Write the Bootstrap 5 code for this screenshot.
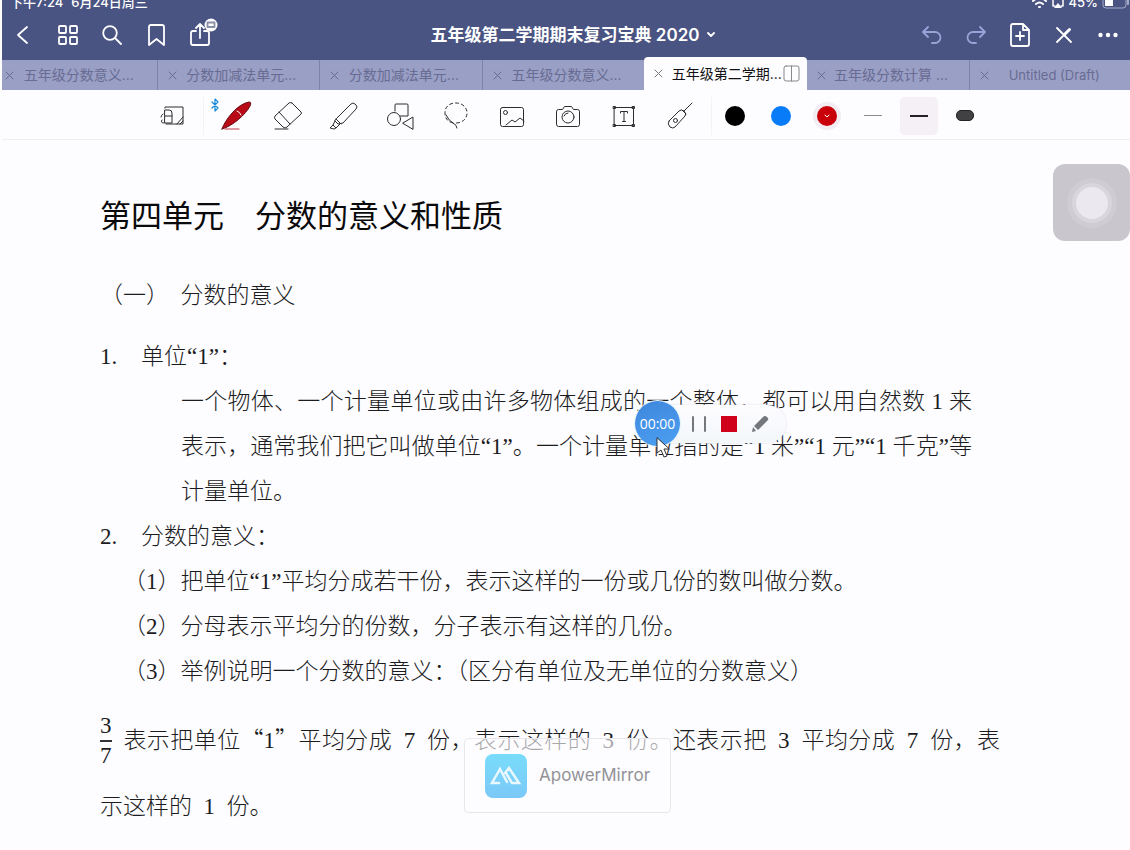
<!DOCTYPE html>
<html lang="zh-CN">
<head>
<meta charset="utf-8">
<meta name="viewport" content="width=device-width, initial-scale=1">
<title>五年级第二学期期末复习宝典2020</title>
<link href="https://cdn.jsdelivr.net/npm/bootstrap@5.3.0/dist/css/bootstrap.min.css" rel="stylesheet">
<style>
  body { background: #fdfcff; border-left: 2px solid #fdfcff; font-family: Inter, "Noto Sans CJK SC", sans-serif; color: #111; }
  svg { display: block; fill: none; stroke: currentColor; stroke-width: 1; stroke-linecap: round; stroke-linejoin: round; }
  button { background: none; border: 0; padding: 0; color: inherit; }
  .app-head { background: #4a5482; color: #fff; overflow: hidden; }
  .status-row { height: 10px; font-size: 13px; line-height: 16px; font-weight: 500; }
  .status-row > div { margin-top: -6px; }
  .title-row { height: 50px; }
  .title-row svg { stroke-width: 1.8; }
  .icon-btn { width: 44px; height: 50px; display: grid; place-items: center; }
  .icon-btn.dimmed { color: #9aa3d8; }
  .doc-title { font-size: 17px; line-height: 24px; font-weight: 600; padding-left: 14px; }
  .share-badge { top: 8px; left: 26px; }
  .tab-strip { display: grid; grid-template-columns: repeat(7, minmax(0, 1fr)); margin: -3px -2px 0 -8px; }
  .tab-item { height: 30px; margin-top: 3px; padding: 0 14px 0 10px; background: #9a9fc6; color: #686c92; border-left: 1px solid #7d83ad; font-size: 14px; line-height: 20px; white-space: nowrap; }
  .tab-item.is-active { margin-top: 0; height: 33px; padding-right: 7px; background: #fdfcff; color: #111; border: 0; border-radius: 4px 4px 0 0; }
  .tab-item a { color: inherit; text-decoration: none; flex: 1; text-align: center; }
  .tab-item.is-active a { text-align: right; padding-right: 1px; }
  .tab-item .latin { font-size: 13px; }
  .tab-close { width: 10px; }
  .tool-row { height: 50px; padding-top: 2px; border-bottom: 1px solid #efeef1; color: #2c2c2e; }
  .tool-btn { width: 56px; height: 48px; display: grid; place-items: center; }
  .tool-sep { width: 4px; height: 38px; border-right: 1px solid #f3f2f5; }
  .pen-btn { width: 46px; height: 48px; display: grid; place-items: center; }
  .dot { width: 20px; height: 20px; border-radius: 50%; display: grid; place-items: center; color: #fff; }
  .dot.black { background: #000; }
  .dot.blue { background: #087cf8; }
  .dot.red { background: #c90009; box-shadow: 0 0 0 4px #f1edf2; }
  .stroke-box { width: 38px; height: 38px; border-radius: 5px; display: grid; place-items: center; }
  .stroke-box.chosen { background: #f4f0f6; }
  .bar-thin { width: 18px; height: 1px; background: #8b8b8f; }
  .bar-mid { width: 18px; height: 2px; background: #222; }
  .bar-wide { width: 18px; height: 11px; border-radius: 5px; background: #414143; border: 1px solid #222; }
  .sheet { padding: 45px 130px 9px 98px; font-family: "Liberation Serif", "Noto Sans CJK SC", serif; font-size: 23px; font-weight: 300; line-height: 45px; color: #1c1c1e; }
  .sheet h1 { font-family: "Noto Sans CJK SC", sans-serif; font-size: 31px; line-height: 58px; font-weight: 400; margin: 0 0 30px; color: #0a0a0a; }
  .sheet h2 { font-size: 23px; line-height: 45px; font-weight: 300; margin: 0 0 16px; }
  .sheet p, .sheet ol { margin: 0; padding: 0; list-style: none; }
  .num { width: 41px; }
  .sheet .explain { padding: 0 28px 0 81px; text-align: justify; }
  .sheet .points { padding-left: 23px; }
  .sheet .example { margin-top: 11px; line-height: 66px; text-align: justify; }
  .wide-quote { font-family: "Noto Sans CJK SC", sans-serif; }
  .fraction { display: inline-flex; flex-direction: column; vertical-align: middle; margin-bottom: 4px; line-height: 28px; text-align: center; }
  .fraction span:first-child { border-bottom: 2px solid #333; }
  .assist { top: 164px; right: 0; width: 77px; height: 77px; border-radius: 12px; background: #c9c6cd; display: grid; place-items: center; }
  .assist span { width: 32px; height: 32px; border-radius: 50%; background: #ebe9ef; box-shadow: 0 0 0 4px #d8d5dc, 0 0 0 9px #cfccd3; }
  .recorder { top: 401px; left: calc(50% + 69px); height: 45px; width: 151px; }
  .rec-panel { height: 38px; margin-left: 22px; padding-left: 34px; gap: 14px; flex: 1; border-radius: 0 19px 19px 0; background: linear-gradient(#fdfcff, #f3f7fa); box-shadow: 0 0 2px #d5d8df; color: #74777b; }
  .rec-time { left: 0; top: 0; width: 45px; height: 45px; border-radius: 50%; background: linear-gradient(160deg, #3f86dd, #4ba0f2); box-shadow: 0 0 0 1px #e4f3fc; color: #fff; font-family: "Open Sans", sans-serif; font-size: 14px; line-height: 45px; text-align: center; }
  .cursor { left: 20px; top: 36px; }
  .mirror { top: 738px; left: calc(50% - 102px); width: 207px; height: 75px; padding-left: 20px; gap: 12px; background: rgba(253,252,255,.62); border: 1px solid #e9e7eb; border-radius: 4px; color: #929297; font-size: 17px; }
  .mirror-logo { width: 42px; height: 44px; border-radius: 8px; background: linear-gradient(#79dcfb, #7bc8f7); display: grid; place-items: center; }
</style>
</head>
<body class="position-relative min-vh-100">
<header class="app-head">
  <div class="status-row d-flex justify-content-between">
    <div class="d-flex gap-2 ps-2"><span>下午7:24</span><span>6月24日周三</span></div>
    <div class="d-flex gap-1">
      <svg width="15" height="16" viewBox="0 0 15 16"><path d="M1 7Q7.500 1 14 7M4 10Q7.500 7 11 10M7 13h1" stroke-width="2"/></svg>
      <svg width="14" height="16" viewBox="0 0 14 16"><path d="M4 12H2V4h10v8h-2" stroke-width="1.500"/><path d="M7 9l4 5H3z" fill="#fff" stroke="none"/></svg>
      <span>45%</span>
      <svg width="28" height="16" viewBox="0 0 28 16"><rect x="1" y="2" width="23" height="12" rx="3" stroke="#a5abca"/><path d="M3 4h8v8H3z" fill="#fff" stroke="none"/><path d="M26 6v4" stroke="#a5abca" stroke-width="2"/></svg>
    </div>
  </div>
  <nav class="title-row d-flex justify-content-between align-items-center" aria-label="文档">
    <div class="d-flex">
      <button class="icon-btn" aria-label="返回"><svg width="20" height="20" viewBox="0 0 20 20"><path d="M13 2L4 10l9 8"/></svg></button>
      <button class="icon-btn" aria-label="缩略图"><svg width="20" height="20" viewBox="0 0 20 20"><rect x="1" y="1" width="7" height="7" rx="1"/><rect x="12" y="1" width="7" height="7" rx="1"/><rect x="1" y="12" width="7" height="7" rx="1"/><rect x="12" y="12" width="7" height="7" rx="1"/></svg></button>
      <button class="icon-btn" aria-label="搜索"><svg width="20" height="20" viewBox="0 0 20 20"><circle cx="8" cy="8" r="6.800"/><path d="M13 13l6 6"/></svg></button>
      <button class="icon-btn" aria-label="书签"><svg width="20" height="22" viewBox="0 0 20 22"><path d="M3 3q0-2 2-2h11q2 0 2 2v18l-7.500-6L3 21z"/></svg></button>
      <button class="icon-btn position-relative" aria-label="分享"><svg width="20" height="24" viewBox="0 0 20 24"><path d="M6 8H3Q1 8 1 10v10q0 2 2 2h14q2 0 2-2V10q0-2-2-2h-3M10 15V2M6 5l4-4 4 4"/></svg>
        <svg class="position-absolute share-badge" width="14" height="14" viewBox="0 0 14 14"><circle cx="7" cy="7" r="6.500" fill="#fff" stroke="none"/><path d="M3.500 4.500h7v4.500h-7z" stroke="#8a8fa5"/></svg></button>
    </div>
    <button class="doc-title d-flex align-items-center gap-2"><span>五年级第二学期期末复习宝典 2020</span><svg width="8" height="6" viewBox="0 0 8 6"><path d="M1 1l3 3 3-3"/></svg></button>
    <div class="d-flex">
      <button class="icon-btn dimmed" aria-label="撤销"><svg width="20" height="20" viewBox="0 0 20 20"><path d="M6 2L1 7l5 5M1 7h12a5.500 5.500 0 0 1 0 11h-3"/></svg></button>
      <button class="icon-btn dimmed" aria-label="重做"><svg width="20" height="20" viewBox="0 0 20 20"><path d="M14 2l5 5-5 5M19 7H7a5.500 5.500 0 0 0 0 11h3"/></svg></button>
      <button class="icon-btn" aria-label="添加页面"><svg width="20" height="24" viewBox="0 0 20 24"><path d="M3 1h10l6 6v14q0 2-2 2H3q-2 0-2-2V3q0-2 2-2zM13 1v6h6M10 9v8M6 13h8"/></svg></button>
      <button class="icon-btn" aria-label="只读模式"><svg width="18" height="18" viewBox="0 0 18 18"><path d="M2 2l14 14M2 16L9 9"/><path d="M9.500 8.500l5-5" stroke-width="3"/></svg></button>
      <button class="icon-btn" aria-label="更多"><svg width="20" height="6" viewBox="0 0 20 6"><g fill="#fff" stroke="none"><circle cx="2.500" cy="3" r="2.200"/><circle cx="10" cy="3" r="2.200"/><circle cx="17.500" cy="3" r="2.200"/></g></svg></button>
    </div>
  </nav>
  <div class="tab-strip">
    <div class="tab-item d-flex align-items-center"><button class="tab-close" aria-label="关闭"><svg width="9" height="9" viewBox="0 0 9 9"><path d="M1 1l7 7M8 1L1 8"/></svg></button><a href="#">五年级分数意义...</a></div>
    <div class="tab-item d-flex align-items-center"><button class="tab-close" aria-label="关闭"><svg width="9" height="9" viewBox="0 0 9 9"><path d="M1 1l7 7M8 1L1 8"/></svg></button><a href="#">分数加减法单元...</a></div>
    <div class="tab-item d-flex align-items-center"><button class="tab-close" aria-label="关闭"><svg width="9" height="9" viewBox="0 0 9 9"><path d="M1 1l7 7M8 1L1 8"/></svg></button><a href="#">分数加减法单元...</a></div>
    <div class="tab-item d-flex align-items-center"><button class="tab-close" aria-label="关闭"><svg width="9" height="9" viewBox="0 0 9 9"><path d="M1 1l7 7M8 1L1 8"/></svg></button><a href="#">五年级分数意义...</a></div>
    <div class="tab-item is-active d-flex align-items-center"><button class="tab-close" aria-label="关闭"><svg width="9" height="9" viewBox="0 0 9 9"><path d="M1 1l7 7M8 1L1 8" stroke="#777"/></svg></button><a href="#" aria-current="page">五年级第二学期...</a><button aria-label="分屏"><svg width="17" height="17" viewBox="0 0 17 17"><path d="M3 1h11q2 0 2 2v11q0 2-2 2H3q-2 0-2-2V3q0-2 2-2zM8.500 1v15" stroke="#88878b"/></svg></button></div>
    <div class="tab-item d-flex align-items-center border-start-0"><button class="tab-close" aria-label="关闭"><svg width="9" height="9" viewBox="0 0 9 9"><path d="M1 1l7 7M8 1L1 8"/></svg></button><a href="#">五年级分数计算 ...</a></div>
    <div class="tab-item d-flex align-items-center"><button class="tab-close" aria-label="关闭"><svg width="9" height="9" viewBox="0 0 9 9"><path d="M1 1l7 7M8 1L1 8"/></svg></button><a href="#" class="latin">Untitled (Draft)</a></div>
  </div>
</header>

<div class="tool-row d-flex justify-content-center align-items-center" role="toolbar" aria-label="绘图工具">
  <button class="tool-btn" aria-label="缩放窗口"><svg width="26" height="24" viewBox="0 0 26 24"><path d="M6 4V3h18v17H7M18 20l6-7M21 20l3-3"/><path d="M6 6h4q3 0 3 3v10H6zM6 12h7M4 10q-2 1-2 3M3 16q-2 3 2 3"/></svg></button>
  <div class="tool-sep"></div>
  <button class="tool-btn" aria-label="钢笔"><svg width="46" height="40" viewBox="0 0 46 40"><path d="M3 6l6 6-3 3V3l3 3-6 6" stroke="#1689d8" stroke-width="1.200"/><path d="M13 33C16 24 28 8 40 6q3 0 1 4C37 18 24 30 13 33z" fill="#b80b16" stroke="#641018"/><path d="M28 15q3 1 4 4" stroke="#fff"/><path d="M16 33h14" stroke="#c23b48"/></svg></button>
  <button class="tool-btn" aria-label="橡皮擦"><svg width="30" height="30" viewBox="0 0 30 30"><path d="M19 2l9 9q1 1 0 2L14 26q-2 2-4 0l-8-8q-1-1 0-3L16 2q1-1 3 0zM6 11l11 12M2 28h13"/></svg></button>
  <button class="tool-btn" aria-label="荧光笔"><svg width="30" height="30" viewBox="0 0 30 30"><path d="M8 17L22 3q2-2 4 0l1 1q2 2 0 4L14 22l-5 1-3-3zM7 18l5 5M6 20l-2 4 3 3 4-4M4 24l-3 3 4 1 2-1"/></svg></button>
  <button class="tool-btn" aria-label="形状"><svg width="28" height="28" viewBox="0 0 28 28"><path d="M9 9V3q0-1 1-1h11q1 0 1 1v11H14"/><circle cx="8" cy="17" r="6.500"/><path d="M17 21l10-6v12z"/></svg></button>
  <button class="tool-btn" aria-label="套索"><svg width="28" height="30" viewBox="0 0 28 30"><path d="M11 22Q3 20 3 12C3 5 8 2 14 2s11 4 11 10-5 10-11 10" stroke-dasharray="3 3"/><path d="M4 14q3 6 7 8t4 5"/></svg></button>
  <button class="tool-btn" aria-label="图片"><svg width="26" height="24" viewBox="0 0 26 24"><rect x="1.500" y="3.500" width="23" height="19" rx="2"/><circle cx="6.500" cy="8.500" r="2"/><path d="M7 21l6-5 3 2 5-4 4 3"/></svg></button>
  <button class="tool-btn" aria-label="相机"><svg width="26" height="24" viewBox="0 0 26 24"><path d="M1.500 7.500q0-2 2-2h4l2-3h7l2 3h4q2 0 2 2v13q0 2-2 2h-19q-2 0-2-2z"/><circle cx="13" cy="13" r="6"/><path d="M9 12q1-3 4-3"/></svg></button>
  <button class="tool-btn" aria-label="文本"><svg width="26" height="24" viewBox="0 0 26 24"><path d="M3.500 3.500h19v18h-19z"/><path d="M2.500 2.500h2v2h-2zM21.500 2.500h2v2h-2zM2.500 20.500h2v2h-2zM21.500 20.500h2v2h-2zM9.500 9V7.500h7V9M13 7.500v10M11.500 17.500h3"/></svg></button>
  <button class="tool-btn" aria-label="激光笔"><svg width="28" height="30" viewBox="0 0 28 30"><path d="M3 20L13 10q2-2 5 0 3 3 1 5L9 26q-2 2-5 0-3-3-1-6zM18 10l8-8M16 9l4 4"/><circle cx="9.500" cy="19.500" r="2"/></svg></button>
  <div class="tool-sep"></div>
  <button class="pen-btn" aria-label="黑色"><span class="dot black"></span></button>
  <button class="pen-btn" aria-label="蓝色"><span class="dot blue"></span></button>
  <button class="pen-btn" aria-label="红色"><span class="dot red"><svg width="6" height="4" viewBox="0 0 6 4"><path d="M1 1l2 2 2-2"/></svg></span></button>
  <button class="pen-btn" aria-label="细线"><span class="stroke-box"><span class="bar-thin"></span></span></button>
  <button class="pen-btn" aria-label="中线"><span class="stroke-box chosen"><span class="bar-mid"></span></span></button>
  <button class="pen-btn" aria-label="粗线"><span class="stroke-box"><span class="bar-wide"></span></span></button>
</div>

<main class="sheet">
  <h1>第四单元　分数的意义和性质</h1>
  <h2>（一）&ensp;分数的意义</h2>
  <div class="d-flex"><span class="num">1.</span><span>单位“1”：</span></div>
  <p class="explain">一个物体、一个计量单位或由许多物体组成的一个整体，都可以用自然数 1 来表示，通常我们把它叫做单位“1”。一个计量单位指的是“1 米”“1 元”“1 千克”等计量单位。</p>
  <div class="d-flex"><span class="num">2.</span><span>分数的意义：</span></div>
  <ol class="points">
    <li>（1）把单位“1”平均分成若干份，表示这样的一份或几份的数叫做分数。</li>
    <li>（2）分母表示平均分的份数，分子表示有这样的几份。</li>
    <li>（3）举例说明一个分数的意义：（区分有单位及无单位的分数意义）</li>
  </ol>
  <p class="example"><span class="fraction"><span>3</span><span>7</span></span>&ensp;表示把单位<span class="wide-quote">“</span>1<span class="wide-quote">”</span>平均分成&ensp;7&ensp;份，表示这样的&ensp;3&ensp;份。还表示把&ensp;3&ensp;平均分成&ensp;7&ensp;份，表示这样的&ensp;1&ensp;份。</p>
</main>

<button class="assist position-absolute" aria-label="辅助触控"><span></span></button>

<div class="recorder position-absolute d-flex align-items-center">
  <div class="rec-panel d-flex align-items-center">
    <button aria-label="暂停"><svg width="16" height="16" viewBox="0 0 16 16"><path d="M2 1v14M14 1v14" stroke-width="2"/></svg></button>
    <button aria-label="停止"><svg width="16" height="16" viewBox="0 0 16 16"><path d="M0 0h16v16H0z" fill="#d0021b" stroke="none"/></svg></button>
    <button aria-label="标注"><svg width="18" height="18" viewBox="0 0 18 18"><path d="M1 17l1-5 3 4zM3 11L12 2q2-2 4 0t1 3L7 15z" fill="#74777b" stroke="none"/></svg></button>
  </div>
  <div class="rec-time position-absolute">00:00</div>
  <svg class="position-absolute cursor" width="16" height="22" viewBox="0 0 16 22"><path d="M2 1v15l4-3 3 7 3-1-3-7h5z" fill="#fff" stroke="#333"/></svg>
</div>

<div class="mirror position-absolute d-flex align-items-center">
  <span class="mirror-logo"><svg width="34" height="20" viewBox="0 0 34 20"><path d="M10 17H3L11 3l7 13M16 7l4-5 10 15h-7l-6-10" stroke="#e9f8ff" stroke-width="2.500" stroke-linejoin="miter"/></svg></span>
  <span>ApowerMirror</span>
</div>
<script src="https://cdn.jsdelivr.net/npm/bootstrap@5.3.0/dist/js/bootstrap.bundle.min.js"></script>
</body>
</html>
